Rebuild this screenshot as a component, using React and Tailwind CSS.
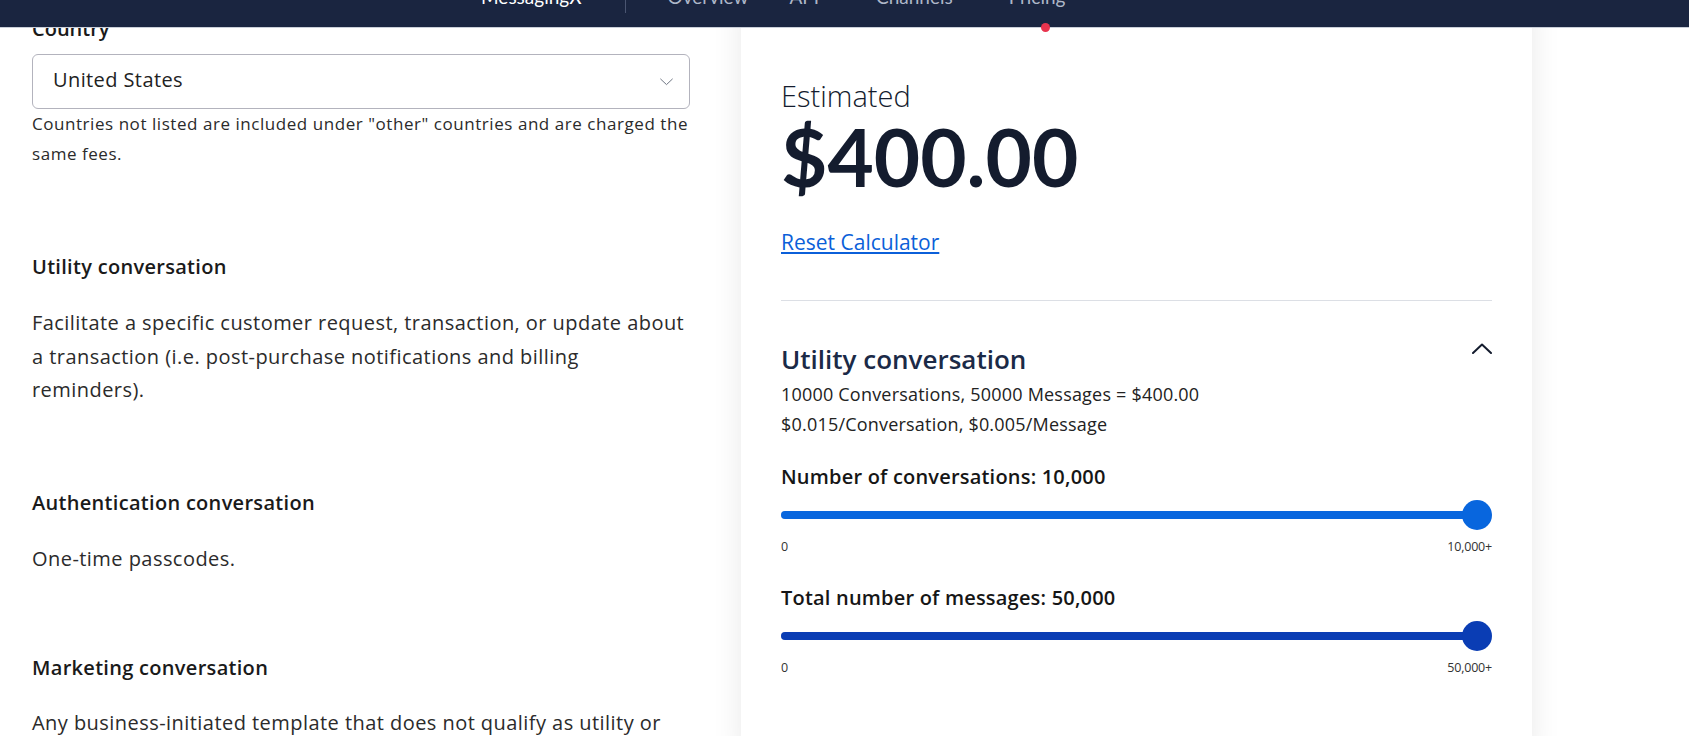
import React, { useState } from 'react';

const navLinks = ['Overview', 'API', 'Channels', 'Pricing'];

const Chevron = ({ up = false, className = '' }) => (
    <svg viewBox="0 0 20 11" className={className} fill="none" stroke="currentColor" strokeWidth="2" strokeLinecap="round" strokeLinejoin="round">
        {up ? <polyline points="1,10 10,1.5 19,10" /> : <polyline points="1,1 10,9.5 19,1" />}
    </svg>
);

const Slider = ({ label, value, max, color }) => {
    const pct = Math.min(100, (value / max) * 100);
    return (
        <div>
            <div className="text-[20px] leading-[28px] font-semibold tracking-[0.2px] text-[#161616]">
                {label}: {value.toLocaleString('en-US')}
            </div>
            <div className="relative h-[30px] mt-[9px]">
                <div className="absolute left-0 right-0 top-[11px] h-[8px] rounded-full bg-[#d9dde4]" />
                <div className={`absolute left-0 top-[11px] h-[8px] rounded-full ${color}`} style={{ width: `calc(${pct}% - 14px)` }} />
                <div className={`absolute top-0 w-[30px] h-[30px] rounded-full ${color}`} style={{ left: `calc(${pct}% - 30px)` }} />
            </div>
            <div className="flex justify-between mt-[7px] text-[12.5px] leading-[20px] tracking-[-0.2px] text-[#333]">
                <span>0</span>
                <span>{max.toLocaleString('en-US')}+</span>
            </div>
        </div>
    );
};

const Section = ({ title, children, mt }) => (
    <div className={mt}>
        <h3 className="text-[20px] leading-[28px] font-semibold tracking-[0.3px] text-[#1a1a1a]">{title}</h3>
        <p className="mt-[25px] text-[20px] leading-[33.5px] tracking-[0.45px] text-[#2b2b2b]">{children}</p>
    </div>
);

export default function App() {
    const [country] = useState('United States');
    const [conversations] = useState(10000);
    const [messages] = useState(50000);

    return (
        <div className="relative min-h-screen bg-white overflow-hidden" style={{ fontFamily: '"Open Sans", Lato, sans-serif' }}>
            {/* top nav, scrolled mostly out of view */}
            <header className="absolute top-0 left-0 right-0 z-10 h-[28px] bg-[#1a2540] border-b border-[#c9ced8] overflow-hidden" style={{ fontFamily: 'Lato, sans-serif' }}>
                <div className="flex items-start -mt-[15px] pl-[481px] text-[19px] leading-[24px]">
                    <span className="text-white">MessagingX</span>
                    <span className="ml-[44px] w-px h-[28px] bg-[#4a5571]" />
                    <nav className="flex ml-[41px] text-[#aeb7c8]">
                        {navLinks.map((link, i) => (
                            <a key={link} className={i === 0 ? '' : i === 1 ? 'ml-[41px]' : i === 2 ? 'ml-[57px]' : 'ml-[56px]'}>
                                {link}
                            </a>
                        ))}
                    </nav>
                </div>
            </header>
            <span className="absolute z-20 top-[23px] left-[1041px] w-[9px] h-[9px] rounded-full bg-[#e8344e]" />

            <div className="flex items-start pl-[32px]">
                {/* left column */}
                <div className="w-[658px] shrink-0 pb-10">
                    <label className="block mt-[14px] text-[20px] leading-[30px] font-semibold text-[#1a1a1a]">Country</label>
                    <div className="mt-[10px] h-[55px] flex items-center justify-between rounded-[6px] border border-[#b3b3bd] pl-[20px] pr-[16px]">
                        <span className="text-[20px] tracking-[0.4px] text-[#222] -mt-[3px]">{country}</span>
                        <Chevron className="w-[13px] h-[8px] text-[#6b7280] stroke-[1.5]" />
                    </div>
                    <p className="text-[17px] leading-[30px] tracking-[0.55px] text-[#2b2b2b]">
                        Countries not listed are included under "other" countries and are charged the same fees.
                    </p>

                    <Section title="Utility conversation" mt="mt-[84px]">
                        Facilitate a specific customer request, transaction, or update about a transaction (i.e. post-purchase notifications and billing reminders).
                    </Section>
                    <Section title="Authentication conversation" mt="mt-[82px]">
                        One-time passcodes.
                    </Section>
                    <div className="mt-[79px]">
                        <h3 className="text-[20px] leading-[28px] font-semibold tracking-[0.3px] text-[#1a1a1a]">Marketing conversation</h3>
                        <p className="mt-[24px] text-[20px] leading-[33.5px] tracking-[0.45px] text-[#2b2b2b]">
                            Any business-initiated template that does not qualify as utility or authentication, such as promotions and offers.
                        </p>
                    </div>
                </div>

                {/* estimate card */}
                <div className="ml-[51px] w-[791px] shrink-0 bg-white shadow-[0_0_28px_rgba(0,0,0,0.09)] px-[40px] pb-[60px] min-h-[760px]">
                    <div className="mt-[84px] text-[29px] leading-[24px] font-light text-[#141c2e]">Estimated</div>
                    <div className="text-[80px] leading-[96px] font-bold text-[#141c2e]" style={{ fontFamily: 'Lato, sans-serif' }}>$400.00</div>
                    <a href="#" className="block w-fit mt-[24px] text-[21px] leading-[28px] text-[#0b5fd9] underline underline-offset-2">
                        Reset Calculator
                    </a>
                    <div className="mt-[44px] h-px bg-[#dcdfe5]" />

                    <div className="flex items-start justify-between mt-[41px]">
                        <h2 className="text-[26px] leading-[34px] font-semibold text-[#1b2a47]">Utility conversation</h2>
                        <Chevron up className="w-[20px] h-[11px] mt-[1px] text-[#141c2e]" />
                    </div>
                    <div className="mt-[3px] text-[18px] leading-[30px] tracking-[0.2px] text-[#222]">
                        <div>10000 Conversations, 50000 Messages = $400.00</div>
                        <div>$0.015/Conversation, $0.005/Message</div>
                    </div>

                    <div className="mt-[24px]">
                        <Slider label="Number of conversations" value={conversations} max={10000} color="bg-[#0866de]" />
                    </div>
                    <div className="mt-[27px]">
                        <Slider label="Total number of messages" value={messages} max={50000} color="bg-[#0a3db4]" />
                    </div>
                </div>
            </div>
        </div>
    );
}
